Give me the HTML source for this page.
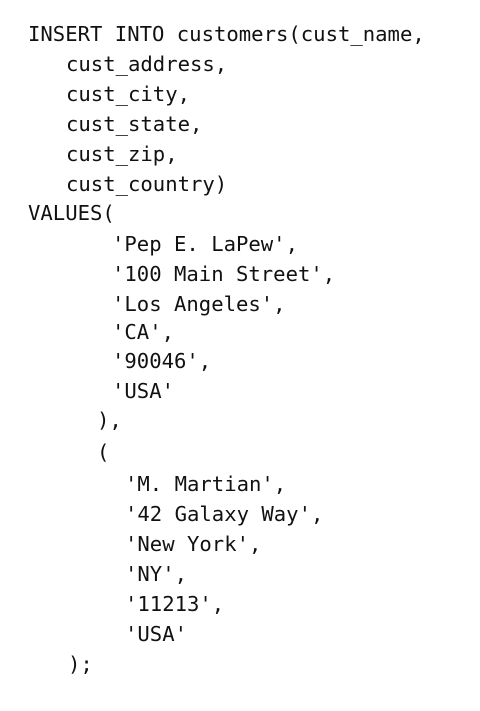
<!DOCTYPE html>
<html><head><style>
body{margin:0;width:480px;height:711px;background:#fff;position:relative;overflow:hidden}
div{position:absolute;font-family:"DejaVu Sans Mono","Liberation Mono",monospace;font-size:20.6px;color:#111;line-height:24px;white-space:pre}
</style></head><body>
<div style="left:28px;top:22px">INSERT INTO customers(cust_name,</div>
<div style="left:66px;top:52px">cust_address,</div>
<div style="left:66px;top:82px">cust_city,</div>
<div style="left:66px;top:112px">cust_state,</div>
<div style="left:66px;top:142px">cust_zip,</div>
<div style="left:66px;top:172px">cust_country)</div>
<div style="left:28px;top:201px">VALUES(</div>
<div style="left:112px;top:232px">'Pep E. LaPew',</div>
<div style="left:112px;top:262px">'100 Main Street',</div>
<div style="left:112px;top:292px">'Los Angeles',</div>
<div style="left:112px;top:320px">'CA',</div>
<div style="left:112px;top:349px">'90046',</div>
<div style="left:112px;top:379px">'USA'</div>
<div style="left:97px;top:408px">),</div>
<div style="left:97px;top:440px">(</div>
<div style="left:125px;top:472px">'M. Martian',</div>
<div style="left:125px;top:502px">'42 Galaxy Way',</div>
<div style="left:125px;top:532px">'New York',</div>
<div style="left:125px;top:562px">'NY',</div>
<div style="left:125px;top:592px">'11213',</div>
<div style="left:125px;top:622px">'USA'</div>
<div style="left:68px;top:652px">);</div>
</body></html>
